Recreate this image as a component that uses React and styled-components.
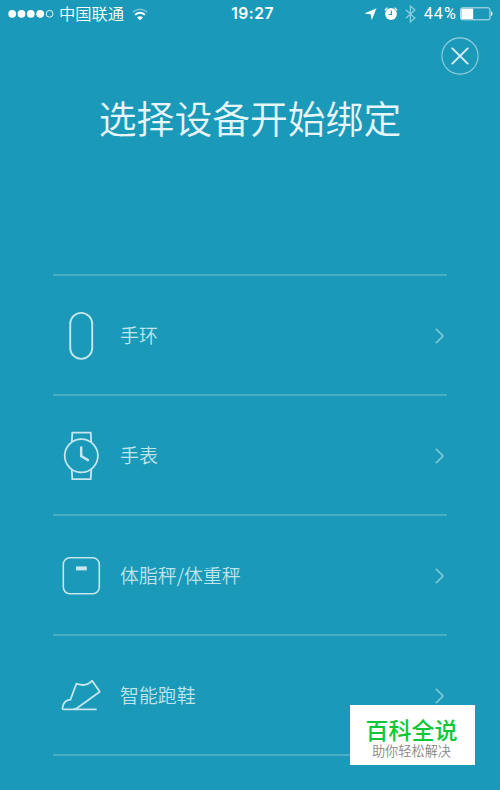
import React from 'react';
import styled, { createGlobalStyle } from 'styled-components';

const GlobalStyle = createGlobalStyle`
  * { box-sizing: border-box; }
  body { margin: 0; background: #1a99b9; }
`;

const Screen = styled.main`
  position: relative;
  width: 500px;
  height: 790px;
  overflow: hidden;
  display: flex;
  flex-direction: column;
  background: #1a99b9;
  color: #fff;
  font-family: 'Noto Sans CJK SC', sans-serif;
`;

const StatusBar = styled.header`
  display: grid;
  grid-template-columns: 1fr auto 1fr;
  align-items: center;
  height: 28px;
  padding: 0 7px 0 8px;
`;

const StatusGroup = styled.div`
  display: flex;
  align-items: center;
  justify-content: ${(p) => (p.$end ? 'flex-end' : 'flex-start')};
`;

const Carrier = styled.span`
  margin: 0 8px 0 5px;
  font-size: 16.3px;
  line-height: 26px;
  padding-bottom: 2px;
  font-weight: 350;
`;

const Clock = styled.time`
  font: 600 15.6px/28px Inter, sans-serif;
  letter-spacing: 0.5px;
  padding-left: 4px;
`;

const Percent = styled.span`
  margin: 0 3px 0 8px;
  font: 400 16.2px/28px Roboto, sans-serif;
  letter-spacing: 1.1px;
`;

const Icon = styled.svg`
  display: block;
  flex: none;
  fill: none;
  stroke: currentColor;
  margin-right: ${(p) => p.$gap || 0}px;
`;

const TopActions = styled.div`
  display: flex;
  justify-content: flex-end;
  padding: 9px 21px 0 0;
`;

const CloseButton = styled.button`
  width: 38px;
  height: 38px;
  padding: 0;
  border: 0;
  background: none;
  color: #fff;
`;

const Title = styled.h1`
  margin: 14px 0 0;
  height: 56px;
  text-align: center;
  font-size: 37.8px;
  line-height: 56px;
  font-weight: 350;
  color: #e6f6fa;
`;

const DeviceList = styled.ul`
  list-style: none;
  margin: 129px 53px 0;
  padding: 0;
  border-top: 2px solid #48adc6;
`;

const DeviceRow = styled.li`
  display: flex;
  align-items: center;
  height: 120px;
  padding-top: 2px;
  border-bottom: 2px solid #48adc6;
`;

const IconSlot = styled.span`
  display: flex;
  justify-content: center;
  width: 56px;
  color: #c4e6ee;
`;

const Label = styled.span`
  flex: 1;
  padding: 0 0 2px 11px;
  font-size: 18.9px;
  line-height: 28px;
  font-weight: 350;
  color: #bfe4ec;
`;

const Chevron = styled(Icon)`
  color: #7dc6d8;
  margin-right: 2px;
`;

const Watermark = styled.aside`
  position: absolute;
  left: 350px;
  top: 705px;
  width: 125px;
  height: 60px;
  padding: 9px 2px 0 0;
  background: #fff;
  text-align: center;
`;

const Brand = styled.div`
  font-size: 23px;
  line-height: 30px;
  font-weight: 500;
  color: #0bc936;
`;

const Slogan = styled.div`
  font-size: 13.2px;
  line-height: 14px;
  font-weight: 350;
  color: #888;
`;

const BandIcon = () => (
  <Icon width="40" height="50" viewBox="0 0 40 50" strokeWidth="1.9">
    <rect x="9.2" y="1.9" width="22" height="46" rx="11" />
  </Icon>
);

const WatchIcon = () => (
  <Icon width="40" height="52" viewBox="0 0 40 52" strokeWidth="1.8">
    <circle cx="20.3" cy="25.8" r="16.6" />
    <path d="M10.8 12.2 11.3 2.7h18.4l.6 9.5M10.8 39.6l.5 9.5h18.4l.6-9.5" />
    <path d="M20.2 17.6v8.6l6.8 4" strokeWidth="2.5" strokeLinecap="round" strokeLinejoin="round" />
  </Icon>
);

const ScaleIcon = () => (
  <Icon width="40" height="40" viewBox="0 0 40 40" strokeWidth="1.6">
    <rect x="2.3" y="1.8" width="36" height="36" rx="6.5" />
    <path d="M15 12.4h10.8" strokeWidth="4" />
  </Icon>
);

const ShoeIcon = () => (
  <Icon width="42" height="34" viewBox="0 0 42 34" strokeWidth="1.8" strokeLinecap="round" strokeLinejoin="round">
    <path d="M36 30.3H3.4Q2.4 30.3 2.5 29.1C2.9 24.9 5.4 21.2 10.4 20.7L16.4 4.7C22.2 6.8 28.2 6.3 32.1 1.7L39.8 12.7 17.2 29.1Q15.4 30.3 12.9 30.3" />
  </Icon>
);

const devices = [
  { name: '手环', Art: BandIcon },
  { name: '手表', Art: WatchIcon },
  { name: '体脂秤/体重秤', Art: ScaleIcon },
  { name: '智能跑鞋', Art: ShoeIcon },
];

export default function App() {
  return (
    <>
      <GlobalStyle />
      <Screen>
        <StatusBar>
          <StatusGroup>
            <Icon width="46" height="10" viewBox="0 0 46 10">
              <g fill="currentColor" stroke="none">
                <circle cx="4.2" cy="4.8" r="3.9" />
                <circle cx="13.5" cy="4.8" r="3.9" />
                <circle cx="22.8" cy="4.8" r="3.9" />
                <circle cx="32.2" cy="4.8" r="3.9" />
              </g>
              <circle cx="41.6" cy="4.8" r="3.4" strokeWidth=".9" />
            </Icon>
            <Carrier>中国联通</Carrier>
            <Icon width="16" height="13" viewBox="0 0 16 13" strokeWidth="1.9">
              <path d="M.8 4.2Q8-1.6 15.2 4.2" opacity=".4" strokeWidth="1.5" />
              <path d="M3 6.9q5-4.4 10 0" />
              <path d="M5 9.5q3-2.4 6 0L8 12.2z" fill="currentColor" stroke="none" />
            </Icon>
          </StatusGroup>
          <Clock>19:27</Clock>
          <StatusGroup $end>
            <Icon $gap={7} width="13" height="13" viewBox="0 0 13 13">
              <path d="M12.5.2 7.8 12 6.6 6.2.3 5.5z" fill="currentColor" stroke="none" />
            </Icon>
            <Icon $gap={7} width="14" height="14" viewBox="0 0 14 14">
              <circle cx="7" cy="7" r="5.9" fill="currentColor" stroke="none" />
              <path d="M.8 3.3 3.4.7M13.2 3.3 10.6.7" strokeWidth="1.2" />
              <path d="M7.4 3.4v4.1H4.6" stroke="#1a99b9" strokeWidth="1.1" />
            </Icon>
            <Icon width="11" height="18" viewBox="0 0 11 18" opacity=".5" strokeWidth="1.3">
              <path d="m.7 4.7 9.2 8.2-4.5 4V1.1l4.5 4-9.2 8.2" />
            </Icon>
            <Percent>44%</Percent>
            <Icon width="33" height="14" viewBox="0 0 33 14">
              <rect x=".6" y=".8" width="29.4" height="12" rx="1.8" strokeWidth="1" opacity=".75" />
              <path d="M1.4 1.6h11.8v10.4H1.4z" fill="currentColor" stroke="none" />
              <path d="M31 4.6c2 .5 2 3.8 0 4.3z" fill="currentColor" stroke="none" />
            </Icon>
          </StatusGroup>
        </StatusBar>
        <TopActions>
          <CloseButton aria-label="关闭">
            <Icon width="38" height="38" viewBox="0 0 38 38">
              <circle cx="19" cy="19" r="18.1" strokeWidth="1.1" opacity=".55" />
              <path d="m11.3 11.3 15.4 15.4m0-15.4L11.3 26.7" strokeWidth="1.8" strokeLinecap="round" opacity=".85" />
            </Icon>
          </CloseButton>
        </TopActions>
        <Title>选择设备开始绑定</Title>
        <DeviceList>
          {devices.map(({ name, Art }) => (
            <DeviceRow key={name}>
              <IconSlot><Art /></IconSlot>
              <Label>{name}</Label>
              <Chevron width="10" height="18" viewBox="0 0 10 18" strokeWidth="1.7">
                <path d="m.9 1.8 7.2 7.2-7.2 7.2" />
              </Chevron>
            </DeviceRow>
          ))}
        </DeviceList>
        <Watermark>
          <Brand>百科全说</Brand>
          <Slogan>助你轻松解决</Slogan>
        </Watermark>
      </Screen>
    </>
  );
}
